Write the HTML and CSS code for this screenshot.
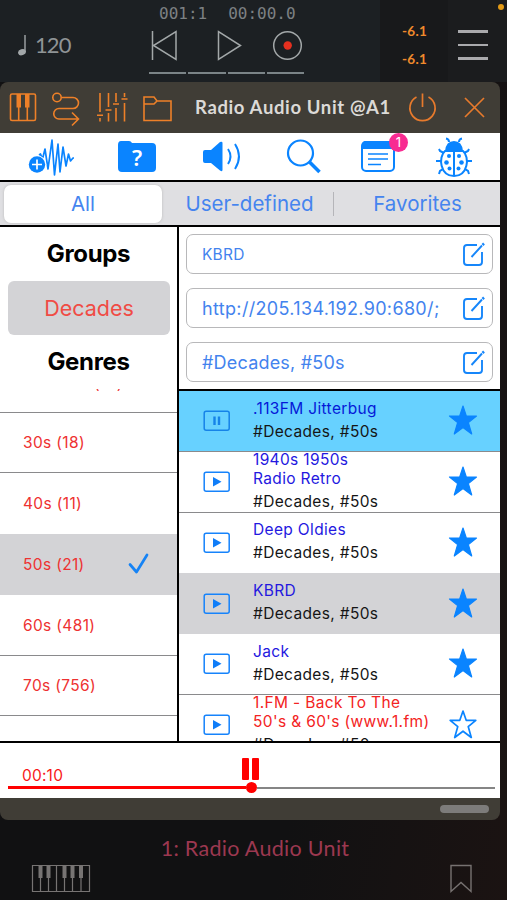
FILE: index.html
```html
<!DOCTYPE html>
<html lang="en">
<head>
<meta charset="utf-8">
<title>Radio Audio Unit</title>
<link rel="stylesheet" href="styles.css">
</head>
<body>
<svg class="defs" aria-hidden="true">
  <symbol id="edit" viewBox="0 0 24 26"><path d="M15 4H5Q2 4 2 7V21Q2 24 5 24H17Q20 24 20 21V11M9.500 16L20 4.500" fill="none" stroke="#1686fa" stroke-width="1.900"/><path d="M20.500 4L22 2.500" stroke="#1686fa" stroke-width="2.500"/></symbol>
  <symbol id="play" viewBox="0 0 28 22"><rect x="1.200" y="1.200" width="25" height="19" rx="2" fill="none" stroke="#1683fb" stroke-width="1.500"/><path d="M10 6L18.500 10.800L10 15.500Z" fill="#0f7df8"/></symbol>
  <symbol id="pause" viewBox="0 0 28 22"><rect x="1.200" y="1.200" width="25" height="19" rx="2" fill="none" stroke="#1683e8" stroke-width="1.500"/><path d="M11.500 6.500V15M16 6.500V15" stroke="#1683e8" stroke-width="2.400"/></symbol>
  <symbol id="star" viewBox="0 0 30 32"><path d="M15 2L18.300 12H28.500L20.400 18.600L23.700 30L15 23.400L6.300 30L9.600 18.600L1.500 12H11.700Z" fill="#0a84ff" stroke="#0a84ff" stroke-width="1.200" stroke-linejoin="round"/></symbol>
  <symbol id="star-empty" viewBox="0 0 30 32"><path d="M15 3L18.200 12.300H27.800L20.200 18.600L23.300 29.500L15 23.200L6.700 29.500L9.800 18.600L2.200 12.300H11.800Z" fill="none" stroke="#0a84ff" stroke-width="1.700" stroke-linejoin="round"/></symbol>
</svg>

<header class="transport">
  <div class="tempo"><svg class="note" viewBox="0 0 10 22"><path d="M8 1V18" stroke="#a2a7a9" stroke-width="1.400"/><ellipse cx="5" cy="18.200" rx="4" ry="3" transform="rotate(-18 5 18.200)" fill="#a2a7a9"/></svg><span>120</span></div>
  <div class="deck">
    <div class="clock"><span>001:1</span><span>00:00.0</span></div>
    <svg class="controls" viewBox="0 0 158 32"><g fill="none" stroke="#a3a8a9" stroke-width="1.500"><path d="M4.500 2V31M28 2.500V30.500L5.500 16.500Z"/><path d="M70.500 2.500V30.500L92.500 16.500Z"/><circle cx="139.500" cy="16.500" r="13.800"/></g><circle cx="139.700" cy="16.500" r="4.200" fill="#e6301f"/></svg>
    <div class="beats"><i></i><i></i><i></i><i></i></div>
  </div>
  <div class="meter"><span>-6.1</span><span>-6.1</span></div>
  <div class="menu"><i></i><i></i><i></i><b class="mic"></b></div>
</header>

<main class="window">
  <div class="titlebar">
    <svg class="tools" viewBox="0 0 180 36"><g fill="none" stroke="#ee8028" stroke-width="1.600">
      <rect x="10.500" y="5" width="25" height="26.500" rx="1.500"/><path d="M18.700 17V31M27.300 17V31"/>
      <circle cx="57" cy="8.500" r="4.200"/><path d="M61.200 8.500H73A5.500 5.500 0 0 1 73 19.500H59A5.200 5.200 0 0 0 59 30H78M72 23.500L78.500 30L72 36.500"/>
      <path d="M100 4V23M100 29V32.500M108.500 4V18M108.500 24V32.500M116 4V13M116 19V32.500M124.500 4V8M124.500 14V32.500M97 26.200H103M105.500 21H111.500M113 15H119M121.500 10H127.500"/>
      <path d="M144 31.500V8H154L157 12H171V31.500ZM144 15H154L157 12"/></g>
      <path d="M16.500 5H21V18.500H16.500ZM25 5H29.500V18.500H25Z" fill="#ee8028"/></svg>
    <h1>Radio Audio Unit @A1</h1>
    <svg class="ends" viewBox="0 0 92 36"><g fill="none" stroke="#e77a2c" stroke-width="1.700"><path d="M9.500 8A12.600 12.600 0 1 0 21.500 8M15.500 4.500V18M58 9L77 28M77 9L58 28"/></g></svg>
  </div>

  <nav class="toolbar">
    <svg viewBox="0 0 48 44"><path d="M12 20L13.500 19L15.500 24L18 14L21 34L25 5L27.500 40L31 9L33 37L36 12L39 31L41.500 19L43.500 26L46 23H47" fill="none" stroke="#0a84ff" stroke-width="1.700" stroke-linejoin="round"/><circle cx="10" cy="29.500" r="9.300" fill="#fff"/><circle cx="10" cy="29.500" r="8.200" fill="#0a84ff"/><path d="M5 29.500H15M10 24.500V34.500" stroke="#fff" stroke-width="1.700"/></svg>
    <div class="folder"><svg viewBox="0 0 40 44"><path d="M1 10Q1 6 4 6H12Q14 6 15 8H35Q39 8 39 12V33Q39 37 35 37H5Q1 37 1 33Z" fill="#0a84ff"/></svg><span>?</span></div>
    <svg viewBox="0 0 40 44"><path d="M1 17Q1 15 3 15H9L18 7Q20.500 6 20.500 8V35Q20.500 37 18 35.500L9 28H3Q1 28 1 26Z" fill="#0a84ff"/><path d="M26 14Q31 21.500 26 29M33 9Q41 21.500 33 34" fill="none" stroke="#0a84ff" stroke-width="1.900"/></svg>
    <svg viewBox="0 0 36 44"><g fill="none" stroke="#0a84ff"><circle cx="14.500" cy="18" r="12.500" stroke-width="2.200"/><path d="M23.500 27L33.500 37" stroke-width="3.500"/></g></svg>
    <div class="news"><svg viewBox="0 0 36 44"><rect x="2" y="7" width="32" height="29" rx="4" fill="#fff" stroke="#0a84ff" stroke-width="2"/><path d="M2 14V10Q2 6 6 6H30Q34 6 34 10V14Z" fill="#0a84ff"/><path d="M8 19H28M8 24H28M8 29.500H21" stroke="#0a84ff" stroke-width="1.600"/></svg><span class="badge">1</span></div>
    <svg viewBox="0 0 40 44"><g fill="none" stroke="#0a84ff" stroke-width="2"><path d="M15 7Q15 4 12 3.500M25 7Q25 4 28 3.500M10 18L6 16L5 14M30 18L34 16L35 14M7 26H2M33 26H38M9 34L6 36L5 39M31 34L34 36L35 39M20 17V40"/><path d="M11 16C4 22 6 41 20 41S36 22 29 16Z"/></g><path d="M11 16Q12 6 20 6T29 16Z" fill="#0a84ff"/><g fill="#0a84ff"><circle cx="15" cy="21" r="2"/><circle cx="25" cy="21" r="2"/><circle cx="12.500" cy="27.500" r="2.300"/><circle cx="27.500" cy="27.500" r="2.300"/><circle cx="15.500" cy="33.500" r="2"/><circle cx="24.500" cy="33.500" r="2"/></g></svg>
  </nav>

  <div class="segments"><span class="active">All</span><span class="user">User-defined</span><span class="fav">Favorites</span></div>

  <div class="browser">
    <aside class="groups">
      <h2>Groups</h2>
      <div class="group">Decades</div>
      <h2>Genres</h2>
      <div class="genres">
        <div class="genre partial">(10)</div>
        <div class="genre">30s (18)</div>
        <div class="genre next-selected">40s (11)</div>
        <div class="genre selected"><span>50s (21)</span><svg viewBox="0 0 24 24"><path d="M3 12.500L9.500 20L20 3" fill="none" stroke="#1683f5" stroke-width="2.700" stroke-linecap="round" stroke-linejoin="round"/></svg></div>
        <div class="genre">60s (481)</div>
        <div class="genre">70s (756)</div>
        <div class="genre"></div>
      </div>
    </aside>
    <section class="detail">
      <div class="fields">
        <div class="field small"><span>KBRD</span><svg><use href="#edit"/></svg></div>
        <div class="field url"><span>http://205.134.192.90:680/;</span><svg><use href="#edit"/></svg></div>
        <div class="field"><span>#Decades, #50s</span><svg><use href="#edit"/></svg></div>
      </div>
      <div class="stations">
        <div class="station playing"><svg class="pl"><use href="#pause"/></svg><div><h3>.113FM Jitterbug</h3><p>#Decades, #50s</p></div><svg class="st"><use href="#star"/></svg></div>
        <div class="station"><svg class="pl"><use href="#play"/></svg><div><h3>1940s 1950s<br>Radio Retro</h3><p>#Decades, #50s</p></div><svg class="st"><use href="#star"/></svg></div>
        <div class="station next-selected"><svg class="pl"><use href="#play"/></svg><div><h3>Deep Oldies</h3><p>#Decades, #50s</p></div><svg class="st"><use href="#star"/></svg></div>
        <div class="station selected"><svg class="pl"><use href="#play"/></svg><div><h3>KBRD</h3><p>#Decades, #50s</p></div><svg class="st"><use href="#star"/></svg></div>
        <div class="station"><svg class="pl"><use href="#play"/></svg><div><h3>Jack</h3><p>#Decades, #50s</p></div><svg class="st"><use href="#star"/></svg></div>
        <div class="station offline"><svg class="pl"><use href="#play"/></svg><div><h3>1.FM - Back To The<br>50's &amp; 60's (www.1.fm)</h3><p>#Decades, #50s</p></div><svg class="st"><use href="#star-empty"/></svg></div>
      </div>
    </section>
  </div>

  <div class="player">
    <div class="status"><span>00:10</span><div class="pause"><i></i><i></i></div></div>
    <div class="slider"><i class="done"></i><i class="knob"></i><i class="rest"></i></div>
  </div>
  <div class="grip"><i></i></div>
</main>

<footer>
  <p>1: Radio Audio Unit</p>
  <div class="dock">
    <svg class="keys" viewBox="0 0 60 29"><path d="M1.500 1.500H58.500V27.500H1.500ZM9.500 14V27M17.500 14V27M25.500 2V27M33.500 14V27M41.500 14V27M50 14V27" fill="none" stroke="#777473" stroke-width="1.200"/><path d="M7.500 2H11.500V14H7.500ZM15.500 2H19.500V14H15.500ZM31.500 2H35.500V14H31.500ZM39.500 2H43.500V14H39.500ZM48 2H52V14H48Z" fill="#777473"/></svg>
    <svg class="mark" viewBox="0 0 24 30"><path d="M2 1.500H22V27.500L12 18.500L2 27.500Z" fill="none" stroke="#777271" stroke-width="1.400"/></svg>
  </div>
</footer>
</body>
</html>
```
FILE: styles.css
```css
* { box-sizing: border-box; margin: 0; padding: 0; }
body { width: 507px; height: 900px; overflow: hidden; background: linear-gradient(100deg, #111112 65%, #1b1312); font-family: Inter, "Liberation Sans", sans-serif; }
svg { display: block; flex: none; }
.defs { display: none; }

.transport { height: 82px; display: grid; grid-template-columns: 148px 232px 68px 59px; background: #1c2023; }
.tempo { display: flex; align-items: center; gap: 8px; padding: 7px 0 0 17px; font: 22px Lato, sans-serif; color: #8f9496; }
.note { width: 10px; height: 22px; }
.tempo span { letter-spacing: -.9px; }
.clock { display: flex; gap: 21px; padding-left: 11px; height: 29px; font: 16px/27px "DejaVu Sans Mono", monospace; color: #7d8183; white-space: nowrap; }
.controls { width: 158px; height: 32px; }
.beats { display: flex; gap: 2px; margin: 11px 0 0 1px; width: 155px; }
.beats i { flex: 1; height: 1.5px; background: #7b8487; }
.meter { background: #18191b; display: flex; flex-direction: column; gap: 8px; padding: 21px 0 0 22px; font: bold 13.5px/20px Lato, sans-serif; color: #f08a2c; letter-spacing: .3px; }
.menu { position: relative; background: #1b1c1e; display: flex; flex-direction: column; gap: 11px; padding: 30px 0 0 10px; }
.menu i { width: 30px; height: 2.5px; background: #aaaaad; }
.mic { position: absolute; left: 50px; top: 4px; width: 6px; height: 6px; border-radius: 50%; background: #e29a16; }

.window { width: 500px; height: 738px; border-radius: 8px; overflow: hidden; background: #403d36; display: grid; grid-template-rows: 51px 47px 47px 516px 55px 22px; }
.titlebar { display: flex; padding-top: 7px; }
.tools { width: 180px; height: 36px; overflow: visible; }
h1 { width: 227px; padding-left: 15px; font: bold 18.5px/36px Lato, sans-serif; letter-spacing: .63px; color: #dcdad7; white-space: nowrap; }
.ends { width: 92px; height: 36px; }

.toolbar { background: #fff; display: flex; padding: 2px 0 0 27px; }
.toolbar svg { height: 44px; width: 48px; overflow: visible; }
.folder { position: relative; width: 40px; margin-left: 42px; }
.folder svg { width: 40px; }
.folder span { position: absolute; inset: 0; text-align: center; font: 600 22px/44px "Noto Sans", sans-serif; color: #fff; }
.folder + svg { width: 40px; margin-left: 45px; }
.folder + svg + svg { width: 36px; margin-left: 44px; }
.news { position: relative; width: 36px; margin-left: 38px; }
.news svg { width: 36px; }
.badge { position: absolute; left: 29px; top: -2px; width: 19px; height: 19px; border-radius: 50%; background: #f82b91; color: #fff; text-align: center; font-size: 13px; line-height: 19px; }
.news + svg { width: 40px; margin-left: 38px; }

.segments { border-top: 2.5px solid #000; border-bottom: 2.5px solid #000; background: #dfdfe2; display: flex; align-items: center; font-size: 20.5px; line-height: 38px; color: #4584ef; white-space: nowrap; }
.segments span { text-align: center; }
.segments .active { width: 158px; margin-left: 4px; height: 38px; border-radius: 7px; background: #fff; box-shadow: 0 0 3px #bbb; }
.segments .user { width: 172px; padding-left: 4px; border-right: 1px solid #b5b5b9; line-height: 24px; }
.fav { width: 167px; }

.browser { display: grid; grid-template-columns: 179px 321px; height: 516px; border-bottom: 2.5px solid #000; background: #fff; overflow: hidden; }
.groups { border-right: 2.5px solid #000; display: flex; flex-direction: column; min-height: 0; }
h2 { flex: none; height: 54px; font-size: 24px; line-height: 54px; letter-spacing: -.35px; text-align: center; }
.group { flex: none; margin: 0 7px 0 8px; height: 54px; border-radius: 6px; background: #d3d3d6; color: #f04b45; font-size: 21.5px; line-height: 54px; text-align: center; }
.genres { flex: 1; min-height: 0; overflow: hidden; }
.genre { height: 60.75px; border-bottom: 1px solid #8a8a8c; padding: 1px 26px 0 23px; display: flex; align-items: center; justify-content: space-between; font-size: 15.5px; letter-spacing: .35px; color: #ee3131; }
.genre svg { width: 24px; height: 24px; }
.genre.partial { height: 23.5px; align-items: flex-start; padding: 0 0 0 94px; font-size: 15.5px; line-height: 0; }
.selected { background: #d3d3d6; border-color: #d3d3d6; }
.next-selected { border-color: #fff; }
.genres .partial { line-height: 0; padding-top: 0; margin-top: -5px; height: 28.5px; }

.fields { height: 162px; padding: 7px 7px 0; display: flex; flex-direction: column; gap: 14px; }
.field { height: 40px; border: 1.5px solid #b8b8ba; border-radius: 7px; padding: 0 6px 0 15px; display: flex; align-items: center; justify-content: space-between; font-size: 18px; letter-spacing: .2px; color: #4383ee; white-space: nowrap; }
.field svg { width: 24px; height: 26px; }
.field.small { font-size: 15.5px; }
.field.url { letter-spacing: .34px; }
.stations { border-top: 2.5px solid #000; height: 352px; overflow: hidden; }
.station { height: 60.75px; padding: 0 22px 2px 24px; border-bottom: 1px solid #8a8a8c; display: grid; grid-template: 57.75px / 50px 1fr 30px; align-items: center; font-size: 15.5px; line-height: 19px; letter-spacing: .35px; white-space: nowrap; color: #151515; }
.station h3 { font: inherit; color: #2418df; }
.station p { margin-top: 4px; }
.station.offline h3 { color: #f32323; }
.station.playing { background: #67d1ff; }
.station.playing h3 { color: #0519d8; }
.station.selected { border-color: #d3d3d6; }
.station.next-selected { border-color: #fff; }
.pl { width: 28px; height: 22px; margin-top: 3px; }
.st { width: 30px; height: 32px; margin-top: 1px; }

.player { background: #fff; padding: 15px 6px 0 8px; }
.status { display: grid; grid-template-columns: 234px 20px; height: 24px; }
.status span { padding: 8px 0 0 14px; font-size: 15.5px; line-height: 20px; letter-spacing: .2px; color: #f81818; }
.pause { display: flex; gap: 3px; }
.pause i { width: 7px; height: 22px; background: #f00; border-radius: 1px; }
.slider { display: flex; align-items: center; height: 11px; }
.done { width: 238px; height: 2.5px; background: #f00; }
.knob { width: 11px; height: 11px; border-radius: 50%; background: #f00; }
.rest { flex: 1; height: 2px; background: #858585; }
.grip { display: flex; justify-content: flex-end; align-items: center; padding-right: 12px; }
.grip i { width: 49px; height: 8px; border-radius: 4px; background: #7d7c7b; }

footer { height: 80px; padding-top: 12px; }
footer p { width: 510px; text-align: center; font: 21.5px/32px Lato, sans-serif; letter-spacing: .3px; color: #9c3850; }
.dock { display: flex; justify-content: space-between; padding: 0 34px 0 31px; }
.keys { width: 60px; height: 29px; }
.mark { width: 24px; height: 30px; }
```
